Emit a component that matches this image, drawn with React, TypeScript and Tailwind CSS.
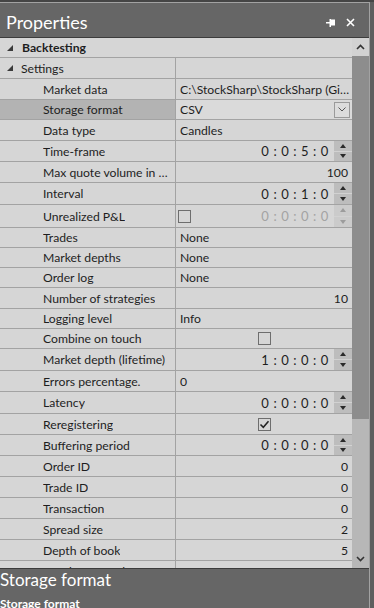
import React from "react";

type Kind = "cat0" | "cat1" | "text" | "num" | "spin" | "check" | "combo" | "pnl";

interface Row {
    label: string;
    kind: Kind;
    value?: string;
    h: string;
    checked?: boolean;
    selected?: boolean;
}

const rows: Row[] = [
    { label: "Backtesting", kind: "cat0", h: "h-[20px]" },
    { label: "Settings", kind: "cat1", h: "h-[21px]" },
    { label: "Market data", kind: "text", value: "C:\\StockSharp\\StockSharp (GitHub)\\Samples\\Testing\\HistoryData", h: "h-[21px]" },
    { label: "Storage format", kind: "combo", value: "CSV", h: "h-[20px]", selected: true },
    { label: "Data type", kind: "text", value: "Candles", h: "h-[21px]" },
    { label: "Time-frame", kind: "spin", value: "0 : 0 : 5 : 0", h: "h-[21px]" },
    { label: "Max quote volume in group", kind: "num", value: "100", h: "h-[21px]" },
    { label: "Interval", kind: "spin", value: "0 : 0 : 1 : 0", h: "h-[22px]" },
    { label: "Unrealized P&L", kind: "pnl", value: "0 : 0 : 0 : 0", h: "h-[23px]" },
    { label: "Trades", kind: "text", value: "None", h: "h-[20px]" },
    { label: "Market depths", kind: "text", value: "None", h: "h-[20px]" },
    { label: "Order log", kind: "text", value: "None", h: "h-[20px]" },
    { label: "Number of strategies", kind: "num", value: "10", h: "h-[21px]" },
    { label: "Logging level", kind: "text", value: "Info", h: "h-[20px]" },
    { label: "Combine on touch", kind: "check", checked: false, h: "h-[20px]" },
    { label: "Market depth (lifetime)", kind: "spin", value: "1 : 0 : 0 : 0", h: "h-[22px]" },
    { label: "Errors percentage.", kind: "text", value: "0", h: "h-[21px]" },
    { label: "Latency", kind: "spin", value: "0 : 0 : 0 : 0", h: "h-[22px]" },
    { label: "Reregistering", kind: "check", checked: true, h: "h-[21px]" },
    { label: "Buffering period", kind: "spin", value: "0 : 0 : 0 : 0", h: "h-[21px]" },
    { label: "Order ID", kind: "num", value: "0", h: "h-[21px]" },
    { label: "Trade ID", kind: "num", value: "0", h: "h-[21px]" },
    { label: "Transaction", kind: "num", value: "0", h: "h-[21px]" },
    { label: "Spread size", kind: "num", value: "2", h: "h-[21px]" },
    { label: "Depth of book", kind: "num", value: "5", h: "h-[21px]" },
    { label: "Number of trades", kind: "num", value: "5", h: "h-[21px]" },
];

function Expander() {
    return (
        <svg width="6" height="6" viewBox="0 0 6 6" className="shrink-0">
            <polygon points="0,6 6,6 6,0" fill="#3a3a3a" />
        </svg>
    );
}

function Spinner({ disabled }: { disabled?: boolean }) {
    const arrow = disabled ? "#9c9c9c" : "#2a2a2a";
    return (
        <div className={`flex flex-col w-[18px] shrink-0 h-full ${disabled ? "bg-[#cbcbcb]" : "bg-[#bdbdbd]"}`}>
            <div className="flex-1 flex items-center justify-center border-b border-[#d2d2d2]">
                <svg width="6" height="4" viewBox="0 0 6 4">
                    <polygon points="0,4 6,4 3,0" fill={arrow} />
                </svg>
            </div>
            <div className="flex-1 flex items-center justify-center">
                <svg width="6" height="4" viewBox="0 0 6 4">
                    <polygon points="0,0 6,0 3,4" fill={arrow} />
                </svg>
            </div>
        </div>
    );
}

function CheckBox({ checked }: { checked?: boolean }) {
    return (
        <div className="w-[13px] h-[13px] shrink-0 border border-[#6e6e6e] flex items-center justify-center">
            {checked && (
                <svg width="11" height="11" viewBox="0 0 11 11">
                    <path d="M1.5 5.5 L4.3 8.3 L9.5 2.2" stroke="#222" strokeWidth="1.5" fill="none" />
                </svg>
            )}
        </div>
    );
}

function Value({ row }: { row: Row }) {
    switch (row.kind) {
        case "text":
            return <div className="w-full min-w-0 pl-[4px] pr-[2px] pt-[2px] truncate">{row.value}</div>;
        case "num":
            return <div className="w-full text-right pr-[4px] pt-[2px]">{row.value}</div>;
        case "spin":
            return (
                <div className="w-full flex items-stretch justify-end h-full">
                    <div className="flex items-center pr-[5px] pt-[2px] tracking-[0.6px] text-[13px]">{row.value}</div>
                    <Spinner />
                </div>
            );
        case "pnl":
            return (
                <div className="w-full flex items-center h-full">
                    <div className="pl-[2px]">
                        <CheckBox />
                    </div>
                    <div className="flex-1 text-right pr-[5px] pt-[2px] tracking-[0.6px] text-[13px] text-[#a3a3a3]">{row.value}</div>
                    <Spinner disabled />
                </div>
            );
        case "check":
            return (
                <div className="w-full flex items-center justify-center h-full">
                    <CheckBox checked={row.checked} />
                </div>
            );
        case "combo":
            return (
                <div className="w-full flex items-center h-full bg-[#dadada]">
                    <div className="flex-1 pl-[4px] pt-[2px]">{row.value}</div>
                    <div className="w-[16px] h-[16px] mr-[2px] border border-[#9a9a9a] bg-[#dcdcdc] flex items-center justify-center">
                        <svg width="8" height="5" viewBox="0 0 8 5">
                            <path d="M0.5 0.5 L4 4 L7.5 0.5" stroke="#555" strokeWidth="1" fill="none" />
                        </svg>
                    </div>
                </div>
            );
        default:
            return null;
    }
}

function GridRow({ row }: { row: Row }) {
    if (row.kind === "cat0") {
        return (
            <div className={`${row.h} shrink-0 flex items-center border-b border-[#a3a3a3] bg-[#d6d6d6]`}>
                <div className="w-[22px] pl-[7px] flex items-center">
                    <Expander />
                </div>
                <span className="font-bold pt-[2px]">{row.label}</span>
            </div>
        );
    }
    if (row.kind === "cat1") {
        return (
            <div className={`${row.h} shrink-0 flex border-b border-[#a3a3a3] bg-[#d6d6d6]`}>
                <div className="w-[176px] flex items-center border-r border-[#a3a3a3]">
                    <div className="w-[21px] pl-[7px] flex items-center">
                        <Expander />
                    </div>
                    <span className="pt-[2px]">{row.label}</span>
                </div>
                <div className="flex-1" />
            </div>
        );
    }
    return (
        <div className={`${row.h} shrink-0 flex border-b border-[#a3a3a3] bg-[#d6d6d6]`}>
            <div
                className={`w-[176px] shrink-0 flex items-center pl-[43px] pr-[2px] border-r border-[#a3a3a3] ${
                    row.selected ? "bg-[#b3b3b3]" : ""
                }`}
            >
                <span className="truncate pt-[2px]">{row.label}</span>
            </div>
            <div className="flex-1 min-w-0 flex items-center h-full">
                <Value row={row} />
            </div>
        </div>
    );
}

function Scrollbar() {
    return (
        <div className="w-[17px] shrink-0 flex flex-col bg-[#b7b7b7]">
            <div className="h-[18px] bg-[#d2d2d2] flex items-center justify-center">
                <svg width="9" height="6" viewBox="0 0 9 6">
                    <path d="M1 5 L4.5 1.5 L8 5" stroke="#333" strokeWidth="1.6" fill="none" />
                </svg>
            </div>
            <div className="h-[363px] bg-[#8d8d8d]" />
            <div className="flex-1" />
            <div className="h-[18px] flex items-center justify-center">
                <svg width="9" height="6" viewBox="0 0 9 6">
                    <path d="M1 1 L4.5 4.5 L8 1" stroke="#333" strokeWidth="1.6" fill="none" />
                </svg>
            </div>
        </div>
    );
}

export default function App() {
    return (
        <div className="w-[374px] h-[608px] overflow-hidden bg-[#5c5c5c] flex flex-col font-['Lato',sans-serif] text-[12.2px] text-[#1e1e1e]">
            <div className="h-[2px] shrink-0 bg-[#454545]" />
            <div className="flex flex-1 min-h-0">
                <div className="w-[370px] flex flex-col border-t border-r border-[#a2a2a2] bg-[#666666]">
                    {/* Title */}
                    <div className="h-[35px] shrink-0 flex items-end justify-between pl-[6px] pr-[14px] pb-[6px] border-b border-[#3c3c3c]">
                        <span className="text-white text-[18px] leading-none">Properties</span>
                        <div className="flex items-center gap-[10px] pb-[4px]">
                            <svg width="10" height="8" viewBox="0 0 10 8">
                                <rect x="4" y="0.5" width="5" height="6" fill="white" />
                                <rect x="0" y="3" width="4" height="1.5" fill="white" />
                                <rect x="3.5" y="0" width="1.5" height="8" fill="white" />
                            </svg>
                            <svg width="9" height="9" viewBox="0 0 9 9">
                                <path d="M1 1 L8 8 M8 1 L1 8" stroke="white" strokeWidth="1.6" />
                            </svg>
                        </div>
                    </div>

                    {/* Grid */}
                    <div className="h-[530px] shrink-0 flex">
                        <div className="flex-1 min-w-0 overflow-hidden flex flex-col">
                            {rows.map((r, i) => (
                                <GridRow key={i} row={r} />
                            ))}
                        </div>
                        <Scrollbar />
                    </div>

                    {/* Description */}
                    <div className="flex-1 border-t border-[#3c3c3c] text-white">
                        <div className="text-[17px] leading-[20px] pt-[1px]">Storage format</div>
                        <div className="text-[12px] font-bold leading-[16px] pt-[6px]">Storage format</div>
                    </div>
                </div>
                <div className="flex-1 bg-[#5e5e5e]" />
            </div>
        </div>
    );
}
